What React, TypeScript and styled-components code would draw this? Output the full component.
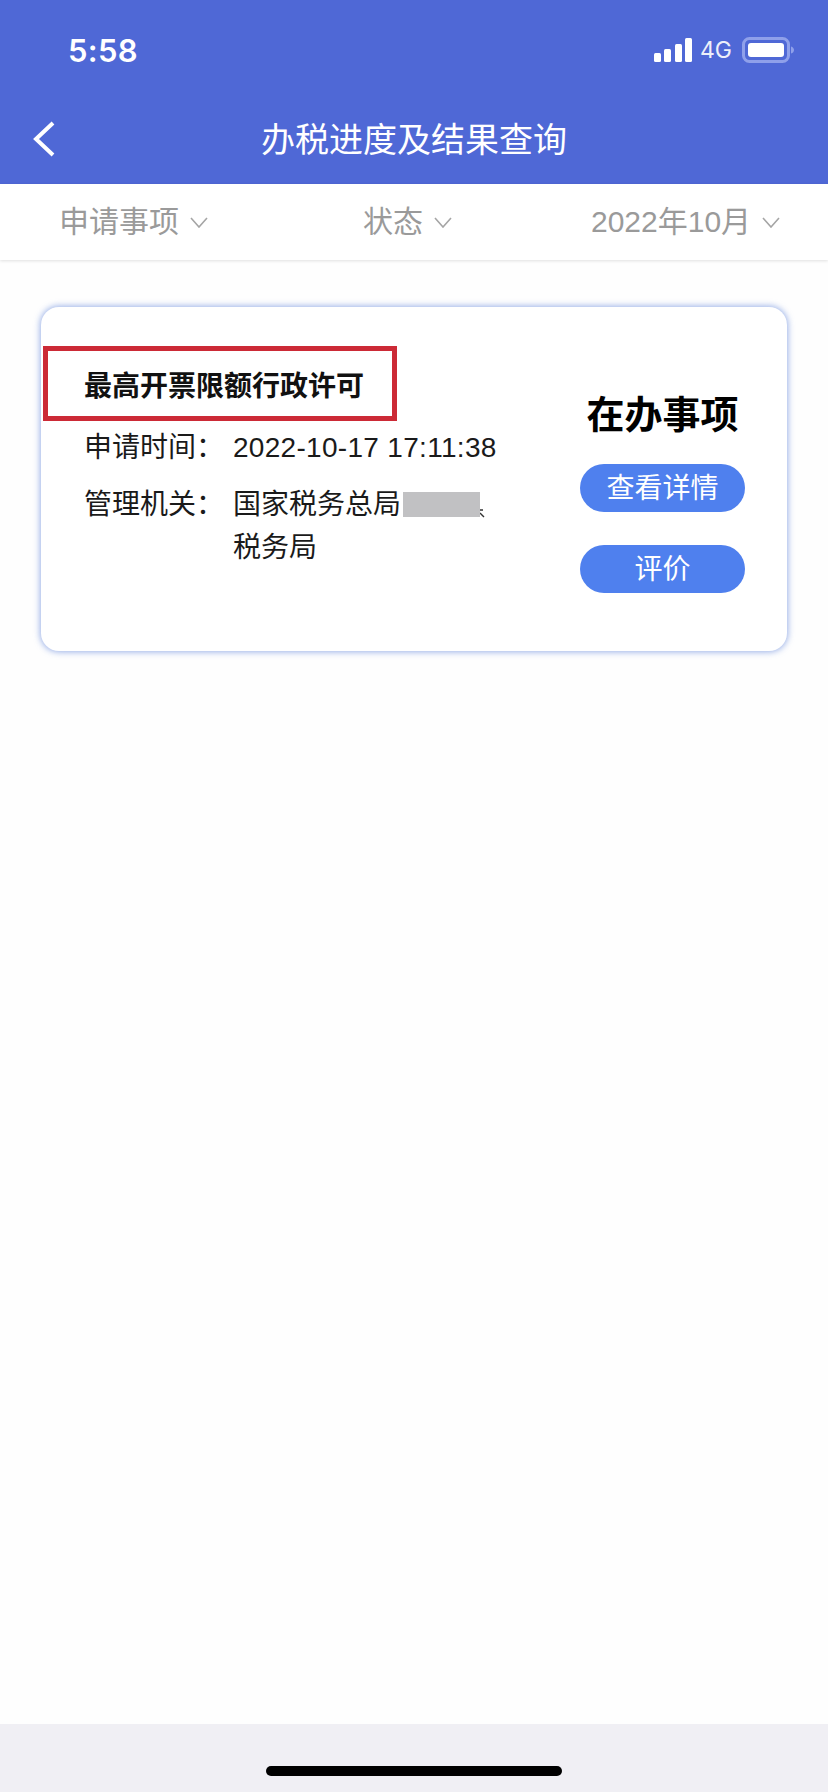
import React, { FC } from 'react'
import styled, { createGlobalStyle } from 'styled-components'

const GlobalStyle = createGlobalStyle`
  html, body {
    margin: 0;
    padding: 0;
    background: #fff;
  }
  body {
    font-family: 'Liberation Sans', 'Noto Sans CJK SC', sans-serif;
  }
`

const Page = styled.div`
  width: 828px;
  height: 1792px;
  display: flex;
  flex-direction: column;
  overflow: hidden;
  background: #fefefe;
`

const Header = styled.header`
  height: 184px;
  flex: none;
  background: #4f68d6;
  color: #fff;
  display: flex;
  flex-direction: column;
`

const StatusBar = styled.div`
  height: 100px;
  display: flex;
  align-items: center;
  justify-content: space-between;
  padding: 0 34px 0 68px;
`

const Clock = styled.span`
  font-family: Inter, 'Liberation Sans', sans-serif;
  font-size: 31px;
  font-weight: 600;
  letter-spacing: 0.3px;
`

const StatusIcons = styled.div`
  display: flex;
  align-items: center;
`

const NetworkLabel = styled.span`
  font-family: Inter, 'Liberation Sans', sans-serif;
  font-size: 23px;
  margin: 0 10px 0 8px;
  opacity: 0.9;
`

const NavBar = styled.div`
  position: relative;
  flex: 1;
  display: flex;
  align-items: center;
  justify-content: center;
  padding-bottom: 4px;
`

const BackIcon = styled.svg`
  position: absolute;
  left: 32px;
  top: 21px;
`

const NavTitle = styled.h1`
  margin: 0;
  font-size: 34px;
  font-weight: 400;
  line-height: 44px;
`

const FilterBar = styled.nav`
  height: 76px;
  flex: none;
  display: grid;
  grid-template-columns: 304px 228px auto;
  align-items: center;
  padding-left: 59px;
  background: #fff;
  box-shadow: 0 1px 3px rgba(0, 0, 0, 0.12);
`

const FilterItem = styled.div`
  display: flex;
  align-items: center;
  gap: 11px;
  color: #9a9a9a;
  font-size: 30px;
  line-height: 40px;
`

const Card = styled.section`
  position: relative;
  margin: 47px 41px 0;
  height: 344px;
  flex: none;
  display: flex;
  justify-content: space-between;
  background: #fff;
  border-radius: 18px;
  box-shadow: 0 0 6px 1px rgba(100, 135, 220, 0.65);
`

const HighlightBox = styled.div`
  position: absolute;
  left: 2px;
  top: 39px;
  width: 354px;
  height: 75px;
  box-sizing: border-box;
  border: 5px solid #cc2a36;
`

const InfoColumn = styled.div`
  padding: 59px 0 0 43px;
`

const ItemTitle = styled.h2`
  margin: 0 0 18px;
  font-size: 28px;
  font-weight: 700;
  line-height: 42px;
  color: #111;
`

const InfoRow = styled.div`
  display: flex;
  margin-bottom: 14px;
  font-size: 28px;
  line-height: 43px;
  color: #1a1a1a;
`

const InfoLabel = styled.span`
  width: 149px;
  flex: none;
`

const DateValue = styled.span`
  letter-spacing: 0.3px;
`

const InfoValue = styled.span`
  width: 270px;
`

const Redacted = styled.span`
  display: inline-block;
  width: 77px;
  height: 25px;
  margin-left: 2px;
  vertical-align: -3px;
  background: #c1c1c3;
`

const RedactedTail = styled.svg`
  vertical-align: -4px;
`

const ActionColumn = styled.div`
  width: 165px;
  margin-right: 42px;
  padding-top: 83px;
  display: flex;
  flex-direction: column;
  align-items: center;
`

const StateLabel = styled.div`
  font-size: 38px;
  font-weight: 700;
  line-height: 50px;
  color: #000;
  white-space: nowrap;
  margin-bottom: 24px;
`

const ActionButton = styled.button`
  width: 165px;
  height: 48px;
  padding: 2px 0 0;
  border: 0;
  border-radius: 24px;
  background: #4f80ee;
  color: #fff;
  font: inherit;
  font-size: 28px;
  line-height: 46px;
  margin-bottom: 33px;
`

const Spacer = styled.div`
  flex: 1;
`

const HomeArea = styled.div`
  height: 68px;
  flex: none;
  display: flex;
  justify-content: center;
  background: #f0eff4;
`

const HomeBar = styled.div`
  width: 296px;
  height: 10px;
  margin-top: 42px;
  border-radius: 5px;
  background: #000;
`

const SignalIcon: FC = () => (
  <svg width="38" height="24" viewBox="0 0 38 24" fill="#fff">
    <rect x="0" y="15" width="7" height="9" rx="1.5" />
    <rect x="10" y="11" width="7" height="13" rx="1.5" />
    <rect x="21" y="6" width="7" height="18" rx="1.5" />
    <rect x="31" y="0" width="7" height="24" rx="1.5" />
  </svg>
)

const BatteryIcon: FC = () => (
  <svg width="52" height="26" viewBox="0 0 52 26">
    <rect x="1.5" y="1.5" width="45" height="23" rx="6" fill="none" stroke="#8fa0ea" strokeWidth="3" />
    <rect x="6" y="6" width="36" height="14" rx="3" fill="#fff" />
    <path d="M49 9.5c2 .5 3 2 3 3.5s-1 3-3 3.5z" fill="#8fa0ea" />
  </svg>
)

const Chevron: FC = () => (
  <svg width="18" height="11" viewBox="0 0 18 11" fill="none" stroke="#a5a5a5" strokeWidth="1.6">
    <path d="M1 1l8 9 8-9" />
  </svg>
)

const FILTERS = ['申请事项', '状态', '2022年10月']

const App: FC = () => (
  <Page>
    <GlobalStyle />
    <Header>
      <StatusBar>
        <Clock>5:58</Clock>
        <StatusIcons>
          <SignalIcon />
          <NetworkLabel>4G</NetworkLabel>
          <BatteryIcon />
        </StatusIcons>
      </StatusBar>
      <NavBar>
        <BackIcon width="24" height="36" viewBox="0 0 24 36" fill="none" stroke="#fff" strokeWidth="4">
          <path d="M21 2L4 18l17 16" />
        </BackIcon>
        <NavTitle>办税进度及结果查询</NavTitle>
      </NavBar>
    </Header>
    <FilterBar>
      {FILTERS.map((name) => (
        <FilterItem key={name}>
          {name}
          <Chevron />
        </FilterItem>
      ))}
    </FilterBar>
    <Card>
      <InfoColumn>
        <ItemTitle>最高开票限额行政许可</ItemTitle>
        <InfoRow>
          <InfoLabel>申请时间：</InfoLabel>
          <DateValue>2022-10-17 17:11:38</DateValue>
        </InfoRow>
        <InfoRow>
          <InfoLabel>管理机关：</InfoLabel>
          <InfoValue>
            国家税务总局
            <Redacted />
            <RedactedTail width="6" height="24" viewBox="0 0 6 24" fill="none" stroke="#333" strokeWidth="1.4">
              <path d="M0 16h3M0 19l4 4" />
            </RedactedTail>
            <br />
            税务局
          </InfoValue>
        </InfoRow>
      </InfoColumn>
      <ActionColumn>
        <StateLabel>在办事项</StateLabel>
        <ActionButton>查看详情</ActionButton>
        <ActionButton>评价</ActionButton>
      </ActionColumn>
      <HighlightBox />
    </Card>
    <Spacer />
    <HomeArea>
      <HomeBar />
    </HomeArea>
  </Page>
)

export default App
